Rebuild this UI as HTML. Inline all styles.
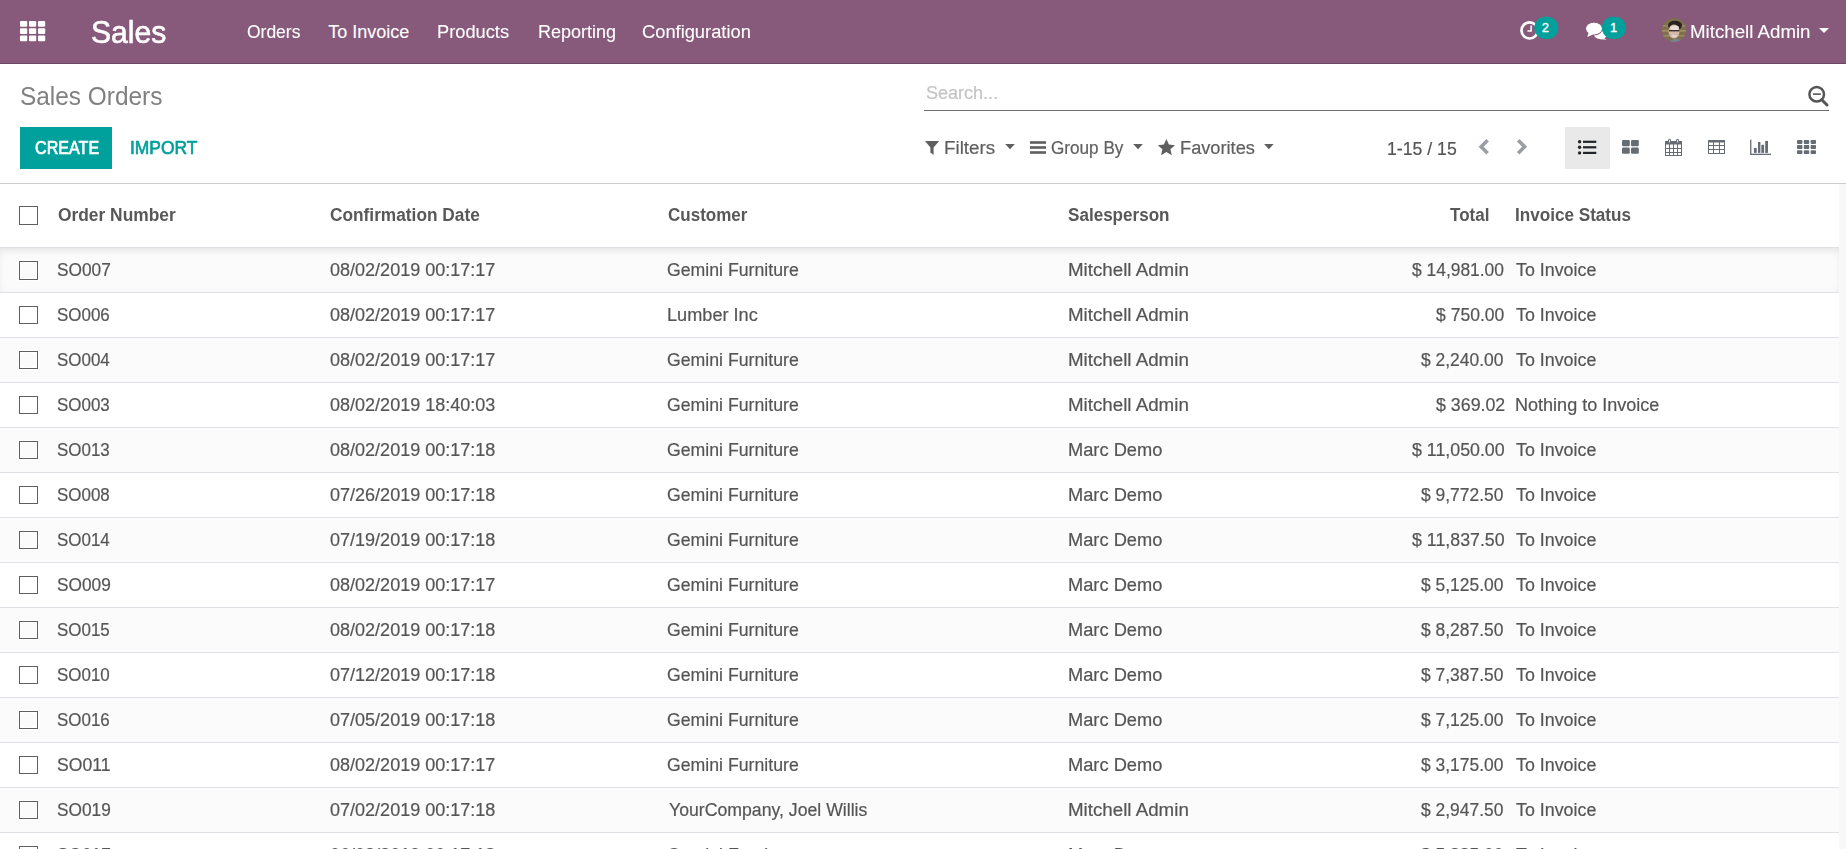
<!DOCTYPE html>
<html><head><meta charset="utf-8"><title>Sales Orders</title><style>
*{margin:0;padding:0;box-sizing:border-box}
html,body{width:1846px;height:849px;overflow:hidden;background:#fff;font-family:"Liberation Sans",sans-serif}
.t{position:absolute;white-space:nowrap;transform-origin:0 0}
.abs{position:absolute}
.cb{position:absolute;left:19px;width:19px;height:19px;border:1px solid #5f5f5f;box-shadow:0 0 0 1px #fff, inset 0 0 0 1px #fff}
</style></head>
<body>
<div class="abs" style="left:0;top:0;width:1846px;height:63px;background:#875A7B"></div>
<div class="abs" style="left:0;top:63px;width:1846px;height:1px;background:#6a4862"></div>
<svg class="abs" style="left:0;top:0" width="60" height="60" fill="#fff"><rect x="20" y="21" width="7.2" height="5.8" rx="1"/><rect x="29" y="21" width="7.2" height="5.8" rx="1"/><rect x="38" y="21" width="7.2" height="5.8" rx="1"/><rect x="20" y="28.2" width="7.2" height="5.8" rx="1"/><rect x="29" y="28.2" width="7.2" height="5.8" rx="1"/><rect x="38" y="28.2" width="7.2" height="5.8" rx="1"/><rect x="20" y="35.4" width="7.2" height="5.8" rx="1"/><rect x="29" y="35.4" width="7.2" height="5.8" rx="1"/><rect x="38" y="35.4" width="7.2" height="5.8" rx="1"/></svg>
<svg class="abs" style="left:1510px;top:10px" width="130" height="40"><circle cx="19.6" cy="20.4" r="8.1" fill="none" stroke="#fff" stroke-width="2.7"/><path d="M21.1 15.6 V21.1 H17.4" fill="none" stroke="#fff" stroke-width="1.5"/><rect x="24.3" y="6.7" width="24" height="22.2" rx="11.1" fill="#00A09D"/><ellipse cx="90.5" cy="24.6" rx="6.6" ry="4.6" fill="#fff"/><path d="M93 27.5 L96.5 29.7 L89 29z" fill="#fff"/><ellipse cx="84" cy="18.6" rx="8.3" ry="6.3" fill="#fff" stroke="#875A7B" stroke-width="1.1"/><path d="M78.6 22.6 L77.3 27 L83.2 24.6z" fill="#fff"/><ellipse cx="84" cy="18.6" rx="7.8" ry="5.8" fill="#fff"/><rect x="91.9" y="6.7" width="24.1" height="22.2" rx="11.1" fill="#00A09D"/></svg>
<span class="abs" style="left:1541.7px;top:20.5px;font-size:13px;line-height:13px;font-weight:400;-webkit-text-stroke:0.35px #fff;color:#fff">2</span>
<span class="abs" style="left:1609.9px;top:20.5px;font-size:13px;line-height:13px;font-weight:400;-webkit-text-stroke:0.35px #fff;color:#fff">1</span>
<svg class="abs" style="left:1661px;top:17px" width="26" height="26"><defs><clipPath id="av"><circle cx="13" cy="13" r="12"/></clipPath><filter id="bl" x="-10%" y="-10%" width="120%" height="120%"><feGaussianBlur stdDeviation="0.7"/></filter></defs><g clip-path="url(#av)"><g filter="url(#bl)"><rect width="26" height="26" fill="#7f704c"/><rect x="0" y="8" width="26" height="1.6" fill="#9a8a5e"/><rect x="0" y="13" width="26" height="1.6" fill="#a39264"/><rect x="0" y="18" width="26" height="1.6" fill="#9a8a5e"/><ellipse cx="14" cy="8.5" rx="7" ry="4.8" fill="#2a2420"/><ellipse cx="13" cy="14.5" rx="5.5" ry="7" fill="#d6b8aa"/><ellipse cx="13.5" cy="11" rx="4.5" ry="2.4" fill="#eadcd4"/><rect x="8" y="13" width="10.5" height="1.4" fill="#3e3230"/><ellipse cx="13.2" cy="19" rx="2.6" ry="1.3" fill="#e4d4d0"/><ellipse cx="15.5" cy="26" rx="7.5" ry="4" fill="#748591"/></g></g></svg>
<svg class="abs" style="left:1819px;top:28px" width="10" height="5"><path d="M0 0 H10 L5 5z" fill="#fff"/></svg>
<div class="abs" style="left:20px;top:127px;width:92px;height:42px;background:#00A09D"></div>
<div class="abs" style="left:924px;top:110px;width:905px;height:1px;background:#6f6f6f"></div>
<svg class="abs" style="left:1800px;top:80px" width="36" height="30"><circle cx="16.7" cy="14.3" r="7.3" fill="none" stroke="#555" stroke-width="2.5"/><path d="M13 14.1 H20.8" stroke="#555" stroke-width="1.6"/><path d="M22 20 L27 25" stroke="#555" stroke-width="3" stroke-linecap="round"/></svg>
<svg class="abs" style="left:920px;top:136px" width="400" height="24" fill="#5f5f5f"><path d="M5 5 H19.2 L13.6 11.5 V19 L10.4 16.6 V11.5 Z"/><path d="M85.2 8 H94.8 L90 13.2z"/><rect x="110" y="5.2" width="16" height="2.6"/><rect x="110" y="10.2" width="16" height="2.6"/><rect x="110" y="15.2" width="16" height="2.6"/><path d="M213.2 8 H222.8 L218 13.2z"/><path d="M246.4 3 L248.9 8.6 L255 9.2 L250.4 13.3 L251.8 19.3 L246.4 16.1 L241 19.3 L242.4 13.3 L237.8 9.2 L243.9 8.6Z"/><path d="M344.1 8 H353.7 L348.9 13.2z"/></svg>
<svg class="abs" style="left:1470px;top:134px" width="70" height="26" fill="none" stroke="#9a9ea3" stroke-width="3.6" stroke-linecap="butt" stroke-linejoin="miter"><path d="M17.6 6.2 L11.2 12.7 L17.6 19.2"/><path d="M48.2 6.2 L54.6 12.7 L48.2 19.2"/></svg>
<div class="abs" style="left:1565px;top:127px;width:45px;height:42px;background:#e9e9e9"></div>
<svg class="abs" style="left:1570px;top:134px" width="260" height="26"><g fill="#212529"><circle cx="9.6" cy="7.8" r="1.7"/><circle cx="9.6" cy="13.3" r="1.7"/><circle cx="9.6" cy="18.9" r="1.7"/><rect x="13" y="6.7" width="13.3" height="2.2"/><rect x="13" y="12.2" width="13.3" height="2.2"/><rect x="13" y="17.8" width="13.3" height="2.2"/></g><g fill="#666c74"><rect x="52" y="6" width="7.8" height="6.2" rx="1.2"/><rect x="61" y="6" width="7.8" height="6.2" rx="1.2"/><rect x="52" y="13.6" width="7.8" height="6.2" rx="1.2"/><rect x="61" y="13.6" width="7.8" height="6.2" rx="1.2"/><rect x="95" y="7" width="1" height="15"/><rect x="111" y="7" width="1" height="15"/><rect x="95" y="7" width="17" height="3.6" rx=".6"/><rect x="95" y="21" width="17" height="1" rx=".5"/><rect x="99" y="10" width="1" height="11"/><rect x="103" y="10" width="1" height="11"/><rect x="107" y="10" width="1" height="11"/><rect x="96" y="14" width="15" height="1"/><rect x="96" y="18" width="15" height="1"/><rect x="98" y="4.7" width="3" height="4.6" rx="1.5"/><rect x="106" y="4.7" width="3" height="4.6" rx="1.5"/><rect x="99" y="5.8" width="1" height="2.6" fill="#e4ebe4"/><rect x="107" y="5.8" width="1" height="2.6" fill="#e4ebe4"/><rect x="138" y="6.3" width="1" height="13.5"/><rect x="154" y="6.3" width="1" height="13.5"/><rect x="138" y="6" width="17" height="2.5" rx="1"/><rect x="138" y="19" width="17" height="1" rx=".5"/><rect x="143" y="8" width="1" height="11"/><rect x="149" y="8" width="1" height="11"/><rect x="139" y="11" width="15" height="1"/><rect x="139" y="15" width="15" height="1"/><rect x="180.1" y="5.6" width="1.3" height="15.2"/><rect x="180.1" y="19.7" width="20.9" height="1.3"/><rect x="183.9" y="13.9" width="2.8" height="5"/><rect x="188" y="8" width="2.4" height="10.9"/><rect x="191.3" y="10.8" width="2.8" height="8.1"/><rect x="195.2" y="6.9" width="2.8" height="12"/></g><g fill="#666c74"><rect x="227" y="6" width="5.4" height="3.9" rx=".8"/><rect x="227" y="11.1" width="5.4" height="3.9" rx=".8"/><rect x="227" y="16.2" width="5.4" height="3.9" rx=".8"/><rect x="233.8" y="6" width="5.4" height="3.9" rx=".8"/><rect x="233.8" y="11.1" width="5.4" height="3.9" rx=".8"/><rect x="233.8" y="16.2" width="5.4" height="3.9" rx=".8"/><rect x="240.6" y="6" width="5.4" height="3.9" rx=".8"/><rect x="240.6" y="11.1" width="5.4" height="3.9" rx=".8"/><rect x="240.6" y="16.2" width="5.4" height="3.9" rx=".8"/></g></svg>
<div class="abs" style="left:0;top:183px;width:1846px;height:1px;background:#cdcdcd"></div>
<div class="abs" style="left:1839px;top:184px;width:7px;height:665px;background:#f8f8f8"></div>
<div class="cb" style="top:206px"></div>
<div class="abs" style="left:0;top:247px;width:1839px;height:1px;background:#dee2e6"></div>
<div class="abs" style="left:0;top:248px;width:1839px;height:44px;background:#fbfbfb;box-shadow:inset 0 6px 7px -3px rgba(0,0,0,0.07), inset 0 0 8px rgba(0,0,0,0.035)"></div>
<div class="abs" style="left:0;top:292px;width:1839px;height:1px;background:#dee2e6"></div>
<div class="cb" style="top:261px;background:#fbfbfb"></div>
<div class="abs" style="left:0;top:293px;width:1839px;height:44px;background:#ffffff"></div>
<div class="abs" style="left:0;top:337px;width:1839px;height:1px;background:#dee2e6"></div>
<div class="cb" style="top:306px;background:#ffffff;height:18px"></div>
<div class="abs" style="left:0;top:338px;width:1839px;height:44px;background:#fbfbfb"></div>
<div class="abs" style="left:0;top:382px;width:1839px;height:1px;background:#dee2e6"></div>
<div class="cb" style="top:351px;background:#fbfbfb;height:18px"></div>
<div class="abs" style="left:0;top:383px;width:1839px;height:44px;background:#ffffff"></div>
<div class="abs" style="left:0;top:427px;width:1839px;height:1px;background:#dee2e6"></div>
<div class="cb" style="top:396px;background:#ffffff;height:18px"></div>
<div class="abs" style="left:0;top:428px;width:1839px;height:44px;background:#fbfbfb"></div>
<div class="abs" style="left:0;top:472px;width:1839px;height:1px;background:#dee2e6"></div>
<div class="cb" style="top:441px;background:#fbfbfb;height:18px"></div>
<div class="abs" style="left:0;top:473px;width:1839px;height:44px;background:#ffffff"></div>
<div class="abs" style="left:0;top:517px;width:1839px;height:1px;background:#dee2e6"></div>
<div class="cb" style="top:486px;background:#ffffff;height:18px"></div>
<div class="abs" style="left:0;top:518px;width:1839px;height:44px;background:#fbfbfb"></div>
<div class="abs" style="left:0;top:562px;width:1839px;height:1px;background:#dee2e6"></div>
<div class="cb" style="top:531px;background:#fbfbfb;height:18px"></div>
<div class="abs" style="left:0;top:563px;width:1839px;height:44px;background:#ffffff"></div>
<div class="abs" style="left:0;top:607px;width:1839px;height:1px;background:#dee2e6"></div>
<div class="cb" style="top:576px;background:#ffffff;height:18px"></div>
<div class="abs" style="left:0;top:608px;width:1839px;height:44px;background:#fbfbfb"></div>
<div class="abs" style="left:0;top:652px;width:1839px;height:1px;background:#dee2e6"></div>
<div class="cb" style="top:621px;background:#fbfbfb;height:18px"></div>
<div class="abs" style="left:0;top:653px;width:1839px;height:44px;background:#ffffff"></div>
<div class="abs" style="left:0;top:697px;width:1839px;height:1px;background:#dee2e6"></div>
<div class="cb" style="top:666px;background:#ffffff;height:18px"></div>
<div class="abs" style="left:0;top:698px;width:1839px;height:44px;background:#fbfbfb"></div>
<div class="abs" style="left:0;top:742px;width:1839px;height:1px;background:#dee2e6"></div>
<div class="cb" style="top:711px;background:#fbfbfb;height:18px"></div>
<div class="abs" style="left:0;top:743px;width:1839px;height:44px;background:#ffffff"></div>
<div class="abs" style="left:0;top:787px;width:1839px;height:1px;background:#dee2e6"></div>
<div class="cb" style="top:756px;background:#ffffff;height:18px"></div>
<div class="abs" style="left:0;top:788px;width:1839px;height:44px;background:#fbfbfb"></div>
<div class="abs" style="left:0;top:832px;width:1839px;height:1px;background:#dee2e6"></div>
<div class="cb" style="top:801px;background:#fbfbfb;height:18px"></div>
<div class="abs" style="left:0;top:833px;width:1839px;height:44px;background:#ffffff"></div>
<div class="abs" style="left:0;top:877px;width:1839px;height:1px;background:#dee2e6"></div>
<div class="cb" style="top:846px;background:#ffffff;height:18px"></div>
<span class="t" id="t0" style="left:90.93px;top:16.80px;font-size:31px;line-height:31px;font-weight:400;color:#fff;transform:scaleX(0.9724);-webkit-text-stroke:0.62px #fff">Sales</span>
<span class="t" id="t1" style="left:246.53px;top:22.70px;font-size:18px;line-height:18px;font-weight:400;color:#fff;transform:scaleX(0.9704);-webkit-text-stroke:0.1px #fff">Orders</span>
<span class="t" id="t2" style="left:328.30px;top:22.70px;font-size:18px;line-height:18px;font-weight:400;color:#fff;transform:scaleX(1.0000);-webkit-text-stroke:0.1px #fff">To Invoice</span>
<span class="t" id="t3" style="left:437.49px;top:22.70px;font-size:18px;line-height:18px;font-weight:400;color:#fff;transform:scaleX(1.0143);-webkit-text-stroke:0.1px #fff">Products</span>
<span class="t" id="t4" style="left:537.70px;top:22.70px;font-size:18px;line-height:18px;font-weight:400;color:#fff;transform:scaleX(1.0013);-webkit-text-stroke:0.1px #fff">Reporting</span>
<span class="t" id="t5" style="left:642.48px;top:22.70px;font-size:18px;line-height:18px;font-weight:400;color:#fff;transform:scaleX(1.0162);-webkit-text-stroke:0.1px #fff">Configuration</span>
<span class="t" id="t6" style="left:1689.86px;top:22.80px;font-size:18px;line-height:18px;font-weight:400;color:#fff;transform:scaleX(1.0386);-webkit-text-stroke:0.1px #fff">Mitchell Admin</span>
<span class="t" id="t7" style="left:19.62px;top:84.00px;font-size:25px;line-height:25px;font-weight:400;color:#808080;transform:scaleX(0.9764)">Sales Orders</span>
<span class="t" id="t8" style="left:34.60px;top:139.00px;font-size:18px;line-height:18px;font-weight:400;color:#fff;transform:scaleX(0.8958);-webkit-text-stroke:0.65px #fff">CREATE</span>
<span class="t" id="t9" style="left:130.13px;top:139.00px;font-size:18px;line-height:18px;font-weight:400;color:#00A09D;transform:scaleX(0.9667);-webkit-text-stroke:0.65px #00A09D">IMPORT</span>
<span class="t" id="t10" style="left:925.50px;top:84.20px;font-size:18px;line-height:18px;font-weight:400;color:#c4c4c4;transform:scaleX(1.0014);-webkit-text-stroke:0.2px #c4c4c4">Search...</span>
<span class="t" id="t11" style="left:943.66px;top:138.80px;font-size:18px;line-height:18px;font-weight:400;color:#5f5f5f;transform:scaleX(1.0437);-webkit-text-stroke:0.2px #5f5f5f">Filters</span>
<span class="t" id="t12" style="left:1050.95px;top:138.80px;font-size:18px;line-height:18px;font-weight:400;color:#5f5f5f;transform:scaleX(0.9520);-webkit-text-stroke:0.2px #5f5f5f">Group By</span>
<span class="t" id="t13" style="left:1179.79px;top:138.80px;font-size:18px;line-height:18px;font-weight:400;color:#5f5f5f;transform:scaleX(1.0123);-webkit-text-stroke:0.2px #5f5f5f">Favorites</span>
<span class="t" id="t14" style="left:1387.02px;top:139.50px;font-size:18px;line-height:18px;font-weight:400;color:#555555;transform:scaleX(0.9814);-webkit-text-stroke:0.2px #555555">1-15 / 15</span>
<span class="t" id="t15" style="left:57.54px;top:206.00px;font-size:18px;line-height:18px;font-weight:700;color:#585858;transform:scaleX(0.9645)">Order Number</span>
<span class="t" id="t16" style="left:329.54px;top:206.00px;font-size:18px;line-height:18px;font-weight:700;color:#585858;transform:scaleX(0.9600)">Confirmation Date</span>
<span class="t" id="t17" style="left:667.75px;top:206.00px;font-size:18px;line-height:18px;font-weight:700;color:#585858;transform:scaleX(0.9458)">Customer</span>
<span class="t" id="t18" style="left:1067.75px;top:206.00px;font-size:18px;line-height:18px;font-weight:700;color:#585858;transform:scaleX(0.9486)">Salesperson</span>
<span class="t" id="t19" style="left:1450.40px;top:206.00px;font-size:18px;line-height:18px;font-weight:700;color:#585858;transform:scaleX(0.9463)">Total</span>
<span class="t" id="t20" style="left:1514.85px;top:206.00px;font-size:18px;line-height:18px;font-weight:700;color:#585858;transform:scaleX(0.9508)">Invoice Status</span>
<span class="t" id="t21" style="left:57.44px;top:261.00px;font-size:18px;line-height:18px;font-weight:400;color:#555555;transform:scaleX(0.9593);-webkit-text-stroke:0.2px #555555">SO007</span>
<span class="t" id="t22" style="left:330.40px;top:261.00px;font-size:18px;line-height:18px;font-weight:400;color:#555555;transform:scaleX(1.0012);-webkit-text-stroke:0.2px #555555">08/02/2019 00:17:17</span>
<span class="t" id="t23" style="left:667.42px;top:261.00px;font-size:18px;line-height:18px;font-weight:400;color:#555555;transform:scaleX(0.9827);-webkit-text-stroke:0.2px #555555">Gemini Furniture</span>
<span class="t" id="t24" style="left:1067.56px;top:261.00px;font-size:18px;line-height:18px;font-weight:400;color:#555555;transform:scaleX(1.0412);-webkit-text-stroke:0.2px #555555">Mitchell Admin</span>
<span class="t" id="t25" style="left:1411.80px;top:261.00px;font-size:18px;line-height:18px;font-weight:400;color:#555555;transform:scaleX(0.9674);-webkit-text-stroke:0.2px #555555">$ 14,981.00</span>
<span class="t" id="t26" style="left:1515.90px;top:261.00px;font-size:18px;line-height:18px;font-weight:400;color:#555555;transform:scaleX(0.9914);-webkit-text-stroke:0.2px #555555">To Invoice</span>
<span class="t" id="t27" style="left:57.46px;top:306.00px;font-size:18px;line-height:18px;font-weight:400;color:#555555;transform:scaleX(0.9418);-webkit-text-stroke:0.2px #555555">SO006</span>
<span class="t" id="t28" style="left:330.40px;top:306.00px;font-size:18px;line-height:18px;font-weight:400;color:#555555;transform:scaleX(1.0012);-webkit-text-stroke:0.2px #555555">08/02/2019 00:17:17</span>
<span class="t" id="t29" style="left:667.39px;top:306.00px;font-size:18px;line-height:18px;font-weight:400;color:#555555;transform:scaleX(1.0079);-webkit-text-stroke:0.2px #555555">Lumber Inc</span>
<span class="t" id="t30" style="left:1067.56px;top:306.00px;font-size:18px;line-height:18px;font-weight:400;color:#555555;transform:scaleX(1.0412);-webkit-text-stroke:0.2px #555555">Mitchell Admin</span>
<span class="t" id="t31" style="left:1435.50px;top:306.00px;font-size:18px;line-height:18px;font-weight:400;color:#555555;transform:scaleX(0.9743);-webkit-text-stroke:0.2px #555555">$ 750.00</span>
<span class="t" id="t32" style="left:1515.90px;top:306.00px;font-size:18px;line-height:18px;font-weight:400;color:#555555;transform:scaleX(0.9914);-webkit-text-stroke:0.2px #555555">To Invoice</span>
<span class="t" id="t33" style="left:57.46px;top:351.00px;font-size:18px;line-height:18px;font-weight:400;color:#555555;transform:scaleX(0.9418);-webkit-text-stroke:0.2px #555555">SO004</span>
<span class="t" id="t34" style="left:330.40px;top:351.00px;font-size:18px;line-height:18px;font-weight:400;color:#555555;transform:scaleX(1.0012);-webkit-text-stroke:0.2px #555555">08/02/2019 00:17:17</span>
<span class="t" id="t35" style="left:667.42px;top:351.00px;font-size:18px;line-height:18px;font-weight:400;color:#555555;transform:scaleX(0.9827);-webkit-text-stroke:0.2px #555555">Gemini Furniture</span>
<span class="t" id="t36" style="left:1067.56px;top:351.00px;font-size:18px;line-height:18px;font-weight:400;color:#555555;transform:scaleX(1.0412);-webkit-text-stroke:0.2px #555555">Mitchell Admin</span>
<span class="t" id="t37" style="left:1421.40px;top:351.00px;font-size:18px;line-height:18px;font-weight:400;color:#555555;transform:scaleX(0.9682);-webkit-text-stroke:0.2px #555555">$ 2,240.00</span>
<span class="t" id="t38" style="left:1515.90px;top:351.00px;font-size:18px;line-height:18px;font-weight:400;color:#555555;transform:scaleX(0.9914);-webkit-text-stroke:0.2px #555555">To Invoice</span>
<span class="t" id="t39" style="left:57.46px;top:396.00px;font-size:18px;line-height:18px;font-weight:400;color:#555555;transform:scaleX(0.9418);-webkit-text-stroke:0.2px #555555">SO003</span>
<span class="t" id="t40" style="left:330.40px;top:396.00px;font-size:18px;line-height:18px;font-weight:400;color:#555555;transform:scaleX(1.0012);-webkit-text-stroke:0.2px #555555">08/02/2019 18:40:03</span>
<span class="t" id="t41" style="left:667.42px;top:396.00px;font-size:18px;line-height:18px;font-weight:400;color:#555555;transform:scaleX(0.9827);-webkit-text-stroke:0.2px #555555">Gemini Furniture</span>
<span class="t" id="t42" style="left:1067.56px;top:396.00px;font-size:18px;line-height:18px;font-weight:400;color:#555555;transform:scaleX(1.0412);-webkit-text-stroke:0.2px #555555">Mitchell Admin</span>
<span class="t" id="t43" style="left:1435.50px;top:396.00px;font-size:18px;line-height:18px;font-weight:400;color:#555555;transform:scaleX(0.9884);-webkit-text-stroke:0.2px #555555">$ 369.02</span>
<span class="t" id="t44" style="left:1514.90px;top:396.00px;font-size:18px;line-height:18px;font-weight:400;color:#555555;transform:scaleX(1.0021);-webkit-text-stroke:0.2px #555555">Nothing to Invoice</span>
<span class="t" id="t45" style="left:57.46px;top:441.00px;font-size:18px;line-height:18px;font-weight:400;color:#555555;transform:scaleX(0.9418);-webkit-text-stroke:0.2px #555555">SO013</span>
<span class="t" id="t46" style="left:330.40px;top:441.00px;font-size:18px;line-height:18px;font-weight:400;color:#555555;transform:scaleX(1.0012);-webkit-text-stroke:0.2px #555555">08/02/2019 00:17:18</span>
<span class="t" id="t47" style="left:667.42px;top:441.00px;font-size:18px;line-height:18px;font-weight:400;color:#555555;transform:scaleX(0.9827);-webkit-text-stroke:0.2px #555555">Gemini Furniture</span>
<span class="t" id="t48" style="left:1067.59px;top:441.00px;font-size:18px;line-height:18px;font-weight:400;color:#555555;transform:scaleX(1.0141);-webkit-text-stroke:0.2px #555555">Marc Demo</span>
<span class="t" id="t49" style="left:1411.80px;top:441.00px;font-size:18px;line-height:18px;font-weight:400;color:#555555;transform:scaleX(0.9882);-webkit-text-stroke:0.2px #555555">$ 11,050.00</span>
<span class="t" id="t50" style="left:1515.90px;top:441.00px;font-size:18px;line-height:18px;font-weight:400;color:#555555;transform:scaleX(0.9914);-webkit-text-stroke:0.2px #555555">To Invoice</span>
<span class="t" id="t51" style="left:57.46px;top:486.00px;font-size:18px;line-height:18px;font-weight:400;color:#555555;transform:scaleX(0.9418);-webkit-text-stroke:0.2px #555555">SO008</span>
<span class="t" id="t52" style="left:330.40px;top:486.00px;font-size:18px;line-height:18px;font-weight:400;color:#555555;transform:scaleX(1.0012);-webkit-text-stroke:0.2px #555555">07/26/2019 00:17:18</span>
<span class="t" id="t53" style="left:667.42px;top:486.00px;font-size:18px;line-height:18px;font-weight:400;color:#555555;transform:scaleX(0.9827);-webkit-text-stroke:0.2px #555555">Gemini Furniture</span>
<span class="t" id="t54" style="left:1067.59px;top:486.00px;font-size:18px;line-height:18px;font-weight:400;color:#555555;transform:scaleX(1.0141);-webkit-text-stroke:0.2px #555555">Marc Demo</span>
<span class="t" id="t55" style="left:1421.40px;top:486.00px;font-size:18px;line-height:18px;font-weight:400;color:#555555;transform:scaleX(0.9682);-webkit-text-stroke:0.2px #555555">$ 9,772.50</span>
<span class="t" id="t56" style="left:1515.90px;top:486.00px;font-size:18px;line-height:18px;font-weight:400;color:#555555;transform:scaleX(0.9914);-webkit-text-stroke:0.2px #555555">To Invoice</span>
<span class="t" id="t57" style="left:57.46px;top:531.00px;font-size:18px;line-height:18px;font-weight:400;color:#555555;transform:scaleX(0.9418);-webkit-text-stroke:0.2px #555555">SO014</span>
<span class="t" id="t58" style="left:330.40px;top:531.00px;font-size:18px;line-height:18px;font-weight:400;color:#555555;transform:scaleX(1.0012);-webkit-text-stroke:0.2px #555555">07/19/2019 00:17:18</span>
<span class="t" id="t59" style="left:667.42px;top:531.00px;font-size:18px;line-height:18px;font-weight:400;color:#555555;transform:scaleX(0.9827);-webkit-text-stroke:0.2px #555555">Gemini Furniture</span>
<span class="t" id="t60" style="left:1067.59px;top:531.00px;font-size:18px;line-height:18px;font-weight:400;color:#555555;transform:scaleX(1.0141);-webkit-text-stroke:0.2px #555555">Marc Demo</span>
<span class="t" id="t61" style="left:1411.80px;top:531.00px;font-size:18px;line-height:18px;font-weight:400;color:#555555;transform:scaleX(0.9882);-webkit-text-stroke:0.2px #555555">$ 11,837.50</span>
<span class="t" id="t62" style="left:1515.90px;top:531.00px;font-size:18px;line-height:18px;font-weight:400;color:#555555;transform:scaleX(0.9914);-webkit-text-stroke:0.2px #555555">To Invoice</span>
<span class="t" id="t63" style="left:57.44px;top:576.00px;font-size:18px;line-height:18px;font-weight:400;color:#555555;transform:scaleX(0.9593);-webkit-text-stroke:0.2px #555555">SO009</span>
<span class="t" id="t64" style="left:330.40px;top:576.00px;font-size:18px;line-height:18px;font-weight:400;color:#555555;transform:scaleX(1.0012);-webkit-text-stroke:0.2px #555555">08/02/2019 00:17:17</span>
<span class="t" id="t65" style="left:667.42px;top:576.00px;font-size:18px;line-height:18px;font-weight:400;color:#555555;transform:scaleX(0.9827);-webkit-text-stroke:0.2px #555555">Gemini Furniture</span>
<span class="t" id="t66" style="left:1067.59px;top:576.00px;font-size:18px;line-height:18px;font-weight:400;color:#555555;transform:scaleX(1.0141);-webkit-text-stroke:0.2px #555555">Marc Demo</span>
<span class="t" id="t67" style="left:1421.40px;top:576.00px;font-size:18px;line-height:18px;font-weight:400;color:#555555;transform:scaleX(0.9682);-webkit-text-stroke:0.2px #555555">$ 5,125.00</span>
<span class="t" id="t68" style="left:1515.90px;top:576.00px;font-size:18px;line-height:18px;font-weight:400;color:#555555;transform:scaleX(0.9914);-webkit-text-stroke:0.2px #555555">To Invoice</span>
<span class="t" id="t69" style="left:57.46px;top:621.00px;font-size:18px;line-height:18px;font-weight:400;color:#555555;transform:scaleX(0.9418);-webkit-text-stroke:0.2px #555555">SO015</span>
<span class="t" id="t70" style="left:330.40px;top:621.00px;font-size:18px;line-height:18px;font-weight:400;color:#555555;transform:scaleX(1.0012);-webkit-text-stroke:0.2px #555555">08/02/2019 00:17:18</span>
<span class="t" id="t71" style="left:667.42px;top:621.00px;font-size:18px;line-height:18px;font-weight:400;color:#555555;transform:scaleX(0.9827);-webkit-text-stroke:0.2px #555555">Gemini Furniture</span>
<span class="t" id="t72" style="left:1067.59px;top:621.00px;font-size:18px;line-height:18px;font-weight:400;color:#555555;transform:scaleX(1.0141);-webkit-text-stroke:0.2px #555555">Marc Demo</span>
<span class="t" id="t73" style="left:1421.40px;top:621.00px;font-size:18px;line-height:18px;font-weight:400;color:#555555;transform:scaleX(0.9682);-webkit-text-stroke:0.2px #555555">$ 8,287.50</span>
<span class="t" id="t74" style="left:1515.90px;top:621.00px;font-size:18px;line-height:18px;font-weight:400;color:#555555;transform:scaleX(0.9914);-webkit-text-stroke:0.2px #555555">To Invoice</span>
<span class="t" id="t75" style="left:57.46px;top:666.00px;font-size:18px;line-height:18px;font-weight:400;color:#555555;transform:scaleX(0.9418);-webkit-text-stroke:0.2px #555555">SO010</span>
<span class="t" id="t76" style="left:330.40px;top:666.00px;font-size:18px;line-height:18px;font-weight:400;color:#555555;transform:scaleX(1.0012);-webkit-text-stroke:0.2px #555555">07/12/2019 00:17:18</span>
<span class="t" id="t77" style="left:667.42px;top:666.00px;font-size:18px;line-height:18px;font-weight:400;color:#555555;transform:scaleX(0.9827);-webkit-text-stroke:0.2px #555555">Gemini Furniture</span>
<span class="t" id="t78" style="left:1067.59px;top:666.00px;font-size:18px;line-height:18px;font-weight:400;color:#555555;transform:scaleX(1.0141);-webkit-text-stroke:0.2px #555555">Marc Demo</span>
<span class="t" id="t79" style="left:1421.40px;top:666.00px;font-size:18px;line-height:18px;font-weight:400;color:#555555;transform:scaleX(0.9682);-webkit-text-stroke:0.2px #555555">$ 7,387.50</span>
<span class="t" id="t80" style="left:1515.90px;top:666.00px;font-size:18px;line-height:18px;font-weight:400;color:#555555;transform:scaleX(0.9914);-webkit-text-stroke:0.2px #555555">To Invoice</span>
<span class="t" id="t81" style="left:57.46px;top:711.00px;font-size:18px;line-height:18px;font-weight:400;color:#555555;transform:scaleX(0.9418);-webkit-text-stroke:0.2px #555555">SO016</span>
<span class="t" id="t82" style="left:330.40px;top:711.00px;font-size:18px;line-height:18px;font-weight:400;color:#555555;transform:scaleX(1.0012);-webkit-text-stroke:0.2px #555555">07/05/2019 00:17:18</span>
<span class="t" id="t83" style="left:667.42px;top:711.00px;font-size:18px;line-height:18px;font-weight:400;color:#555555;transform:scaleX(0.9827);-webkit-text-stroke:0.2px #555555">Gemini Furniture</span>
<span class="t" id="t84" style="left:1067.59px;top:711.00px;font-size:18px;line-height:18px;font-weight:400;color:#555555;transform:scaleX(1.0141);-webkit-text-stroke:0.2px #555555">Marc Demo</span>
<span class="t" id="t85" style="left:1421.40px;top:711.00px;font-size:18px;line-height:18px;font-weight:400;color:#555555;transform:scaleX(0.9682);-webkit-text-stroke:0.2px #555555">$ 7,125.00</span>
<span class="t" id="t86" style="left:1515.90px;top:711.00px;font-size:18px;line-height:18px;font-weight:400;color:#555555;transform:scaleX(0.9914);-webkit-text-stroke:0.2px #555555">To Invoice</span>
<span class="t" id="t87" style="left:57.42px;top:756.00px;font-size:18px;line-height:18px;font-weight:400;color:#555555;transform:scaleX(0.9774);-webkit-text-stroke:0.2px #555555">SO011</span>
<span class="t" id="t88" style="left:330.40px;top:756.00px;font-size:18px;line-height:18px;font-weight:400;color:#555555;transform:scaleX(1.0012);-webkit-text-stroke:0.2px #555555">08/02/2019 00:17:17</span>
<span class="t" id="t89" style="left:667.42px;top:756.00px;font-size:18px;line-height:18px;font-weight:400;color:#555555;transform:scaleX(0.9827);-webkit-text-stroke:0.2px #555555">Gemini Furniture</span>
<span class="t" id="t90" style="left:1067.59px;top:756.00px;font-size:18px;line-height:18px;font-weight:400;color:#555555;transform:scaleX(1.0141);-webkit-text-stroke:0.2px #555555">Marc Demo</span>
<span class="t" id="t91" style="left:1421.40px;top:756.00px;font-size:18px;line-height:18px;font-weight:400;color:#555555;transform:scaleX(0.9682);-webkit-text-stroke:0.2px #555555">$ 3,175.00</span>
<span class="t" id="t92" style="left:1515.90px;top:756.00px;font-size:18px;line-height:18px;font-weight:400;color:#555555;transform:scaleX(0.9914);-webkit-text-stroke:0.2px #555555">To Invoice</span>
<span class="t" id="t93" style="left:57.44px;top:801.00px;font-size:18px;line-height:18px;font-weight:400;color:#555555;transform:scaleX(0.9593);-webkit-text-stroke:0.2px #555555">SO019</span>
<span class="t" id="t94" style="left:330.40px;top:801.00px;font-size:18px;line-height:18px;font-weight:400;color:#555555;transform:scaleX(1.0012);-webkit-text-stroke:0.2px #555555">07/02/2019 00:17:18</span>
<span class="t" id="t95" style="left:668.50px;top:801.00px;font-size:18px;line-height:18px;font-weight:400;color:#555555;transform:scaleX(0.9817);-webkit-text-stroke:0.2px #555555">YourCompany, Joel Willis</span>
<span class="t" id="t96" style="left:1067.56px;top:801.00px;font-size:18px;line-height:18px;font-weight:400;color:#555555;transform:scaleX(1.0412);-webkit-text-stroke:0.2px #555555">Mitchell Admin</span>
<span class="t" id="t97" style="left:1421.40px;top:801.00px;font-size:18px;line-height:18px;font-weight:400;color:#555555;transform:scaleX(0.9682);-webkit-text-stroke:0.2px #555555">$ 2,947.50</span>
<span class="t" id="t98" style="left:1515.90px;top:801.00px;font-size:18px;line-height:18px;font-weight:400;color:#555555;transform:scaleX(0.9914);-webkit-text-stroke:0.2px #555555">To Invoice</span>
<span class="t" id="t99" style="left:57.44px;top:846.00px;font-size:18px;line-height:18px;font-weight:400;color:#555555;transform:scaleX(0.9593);-webkit-text-stroke:0.2px #555555">SO017</span>
<span class="t" id="t100" style="left:330.40px;top:846.00px;font-size:18px;line-height:18px;font-weight:400;color:#555555;transform:scaleX(1.0012);-webkit-text-stroke:0.2px #555555">06/03/2019 00:17:18</span>
<span class="t" id="t101" style="left:667.42px;top:846.00px;font-size:18px;line-height:18px;font-weight:400;color:#555555;transform:scaleX(0.9827);-webkit-text-stroke:0.2px #555555">Gemini Furniture</span>
<span class="t" id="t102" style="left:1067.59px;top:846.00px;font-size:18px;line-height:18px;font-weight:400;color:#555555;transform:scaleX(1.0141);-webkit-text-stroke:0.2px #555555">Marc Demo</span>
<span class="t" id="t103" style="left:1421.40px;top:846.00px;font-size:18px;line-height:18px;font-weight:400;color:#555555;transform:scaleX(0.9682);-webkit-text-stroke:0.2px #555555">$ 5,885.00</span>
<span class="t" id="t104" style="left:1515.90px;top:846.00px;font-size:18px;line-height:18px;font-weight:400;color:#555555;transform:scaleX(0.9914);-webkit-text-stroke:0.2px #555555">To Invoice</span>
</body></html>
